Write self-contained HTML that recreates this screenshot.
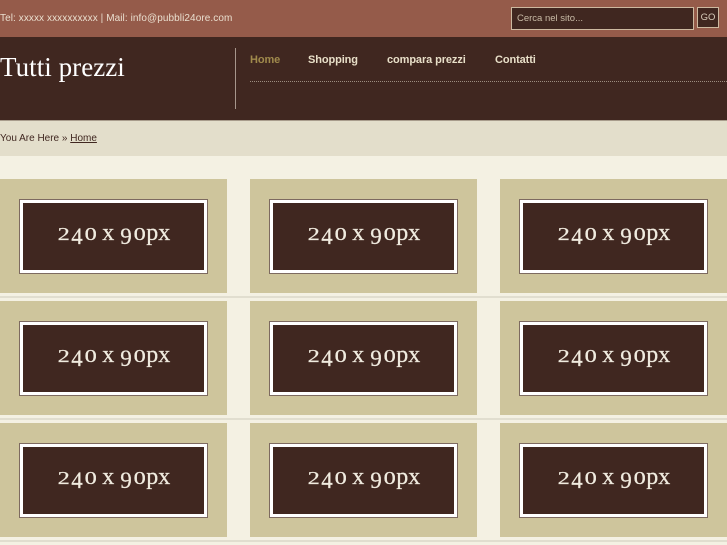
<!DOCTYPE html>
<html><head><meta charset="utf-8"><style>
html,body{margin:0;padding:0}
body{width:727px;height:545px;overflow:hidden;background:#f4f1e3;position:relative;font-family:"Liberation Sans",sans-serif}
div,a,span{position:absolute;white-space:nowrap}
.box{background:#cec59c;width:227px;height:114px}
.img{left:19px;top:19.5px;width:189px;height:75.5px;box-sizing:border-box;border:1px solid #7d6a60;background:#fff}
.in{left:3px;top:3px;width:181px;height:67.5px;background:#402720;color:#f0ebdf;font:24px/60px "Liberation Serif",serif;text-align:center;word-spacing:-1px;-webkit-text-stroke:.25px #f0ebdf}
i{font-style:normal;display:inline-block;width:13.5px;font-size:18px;line-height:18px;text-align:center;transform:scaleX(1.35)}
i.o{position:relative;top:4.5px;font-size:23px;transform:none}
.sep{left:0;width:727px;height:2px;background:#e1decf}
.nav{top:53px;font:bold 11px/14px "Liberation Sans",sans-serif;color:#e8dfc8;letter-spacing:-.1px}
</style></head><body>
<div style="left:0;top:0;width:727px;height:37px;background:#955b4a"></div>
<div style="left:0;top:12px;font-size:10px;line-height:13px;color:#eadfcf;letter-spacing:.08px">Tel: xxxxx xxxxxxxxxx | Mail: info@pubbli24ore.com</div>
<div style="left:511px;top:7px;width:183px;height:23px;box-sizing:border-box;border:1px solid #cdb9a0;background:#402720;color:#c9bba6;font-size:9.5px;line-height:21px;padding-left:5px">Cerca nel sito...</div>
<div style="left:697px;top:7px;width:22px;height:21px;box-sizing:border-box;border:1px solid #cdb9a0;background:#402720;color:#d8cdbb;font-size:9.5px;line-height:19px;text-align:center">GO</div>
<div style="left:0;top:37px;width:727px;height:83px;background:#402720"></div>
<div style="left:0;top:50px;font:27px/34px 'Liberation Serif',serif;color:#fff;letter-spacing:.05px">Tutti prezzi</div>
<div style="left:235px;top:48px;width:1px;height:61px;background:#a7968c"></div>
<div class="nav" style="left:250px;color:#a08a4c">Home</div>
<div class="nav" style="left:308px">Shopping</div>
<div class="nav" style="left:387px">compara prezzi</div>
<div class="nav" style="left:495px">Contatti</div>
<div style="left:250px;top:81px;width:477px;height:0;border-top:1px dotted #9c8d80"></div>
<div style="left:0;top:120px;width:727px;height:36px;background:#e3decb;border-top:1px solid #a89c8c;box-sizing:border-box"></div>
<div style="left:0;top:132px;font-size:10px;line-height:13px;color:#402720">You Are Here » <u>Home</u></div>

<div class="sep" style="top:296px"></div>
<div class="sep" style="top:418px"></div>
<div class="sep" style="top:540px"></div>

<div class="box" style="left:0;top:179px"><div class="img"><div class="in"><i>2</i><i class="o">4</i><i>0</i> x <i class="o">9</i><i>0</i>px</div></div></div>
<div class="box" style="left:250px;top:179px"><div class="img"><div class="in"><i>2</i><i class="o">4</i><i>0</i> x <i class="o">9</i><i>0</i>px</div></div></div>
<div class="box" style="left:500px;top:179px"><div class="img"><div class="in"><i>2</i><i class="o">4</i><i>0</i> x <i class="o">9</i><i>0</i>px</div></div></div>
<div class="box" style="left:0;top:301px"><div class="img"><div class="in"><i>2</i><i class="o">4</i><i>0</i> x <i class="o">9</i><i>0</i>px</div></div></div>
<div class="box" style="left:250px;top:301px"><div class="img"><div class="in"><i>2</i><i class="o">4</i><i>0</i> x <i class="o">9</i><i>0</i>px</div></div></div>
<div class="box" style="left:500px;top:301px"><div class="img"><div class="in"><i>2</i><i class="o">4</i><i>0</i> x <i class="o">9</i><i>0</i>px</div></div></div>
<div class="box" style="left:0;top:423px"><div class="img"><div class="in"><i>2</i><i class="o">4</i><i>0</i> x <i class="o">9</i><i>0</i>px</div></div></div>
<div class="box" style="left:250px;top:423px"><div class="img"><div class="in"><i>2</i><i class="o">4</i><i>0</i> x <i class="o">9</i><i>0</i>px</div></div></div>
<div class="box" style="left:500px;top:423px"><div class="img"><div class="in"><i>2</i><i class="o">4</i><i>0</i> x <i class="o">9</i><i>0</i>px</div></div></div>
</body></html>
